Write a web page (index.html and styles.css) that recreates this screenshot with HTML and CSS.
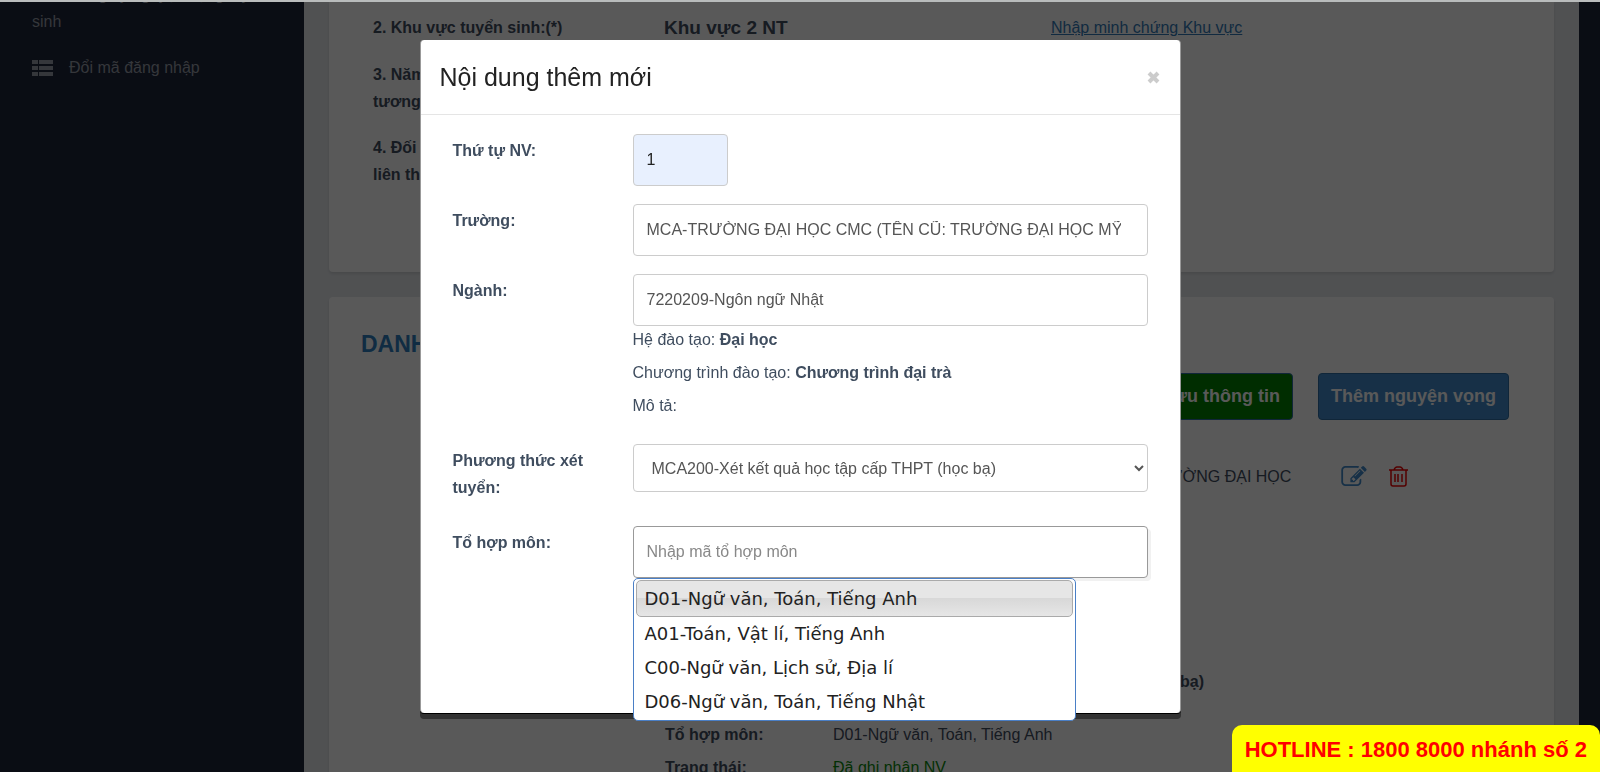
FILE: index.html
```html
<!DOCTYPE html>
<html lang="vi">
<head>
<meta charset="utf-8">
<title>Đăng ký nguyện vọng</title>
<link rel="stylesheet" href="styles.css">
</head>
<body>
<div class="page">
  <nav class="sidebar">
    <a class="nav-item nav-item-wrap" href="#"><span class="nav-first">Đăng ký nguyện vọng tuyển</span> sinh</a>
    <a class="nav-item" href="#">
      <svg class="nav-icon" viewBox="0 0 21 16" aria-hidden="true"><path d="M0 0h6v4H0zM7 0h14v4H7zM0 6h6v4H0zM7 6h14v4H7zM0 12h6v4H0zM7 12h14v4H7z"/></svg>
      <span>Đổi mã đăng nhập</span>
    </a>
  </nav>
  <main class="content">
    <section class="card card-info">
      <div class="info-row">
        <b>2. Khu vực tuyển sinh:(*)</b>
        <b class="info-value">Khu vực 2 NT</b>
        <a class="link" href="#">Nhập minh chứng Khu vực</a>
      </div>
      <div class="info-row"><b>3. Năm tốt nghiệp<br>tương đương:(*)</b></div>
      <div class="info-row"><b>4. Đối tượng<br>liên thông:</b></div>
    </section>
    <section class="card card-list">
      <h2 class="card-title">DANH SÁCH NGUYỆN VỌNG</h2>
      <div class="actions">
        <button class="btn btn-save" type="button">Lưu thông tin</button>
        <button class="btn" type="button">Thêm nguyện vọng</button>
      </div>
      <div class="wish">
        <dl class="wish-data">
          <dt>Trường:</dt><dd class="wish-long">MCA-TRƯỜNG ĐẠI HỌC CMC (TÊN CŨ: TRƯỜNG ĐẠI HỌC MỸ THUẬT CÔNG NGHIỆP Á CHÂU)</dd>
          <dt>Ngành:</dt><dd>7220209-Ngôn ngữ Nhật</dd>
          <dt>Hệ đào tạo:</dt><dd>Đại học</dd>
          <dt>Chương trình:</dt><dd>Chương trình đại trà</dd>
          <dt class="gap-small">Mô tả:</dt><dd></dd>
          <dt class="gap-after">Phương thức:</dt><dd class="wish-long"><b>MCA200-Xét kết quả học tập cấp THPT (học bạ)</b></dd>
          <dt>Tổ hợp môn:</dt><dd>D01-Ngữ văn, Toán, Tiếng Anh</dd>
          <dt>Trạng thái:</dt><dd class="ok">Đã ghi nhận NV</dd>
        </dl>
        <div class="wish-tools">
          <button class="tool tool-edit" type="button" aria-label="Sửa">
            <svg viewBox="0 128 1792 1408" width="26" height="20"><path d="M888 1184l116-116-152-152-116 116v56h96v96h56zm440-720q-16-16-33 1l-350 350q-17 17-1 33t33-1l350-350q17-17 1-33zm80 594v190q0 119-84.500 203.500t-203.500 84.500h-832q-119 0-203.500-84.500t-84.500-203.500v-832q0-119 84.500-203.500t203.500-84.500h832q63 0 117 25 15 7 18 23 3 17-9 29l-49 49q-14 14-32 8-23-6-45-6h-832q-66 0-113 47t-47 113v832q0 66 47 113t113 47h832q66 0 113-47t47-113v-126q0-13 9-22l64-64q15-15 35-7t20 29zm-96-738l288 288-672 672h-288v-288zm444 132l-92 92-288-288 92-92q28-28 68-28t68 28l152 152q28 28 28 68t-28 68z"/></svg>
          </button>
          <button class="tool tool-delete" type="button" aria-label="Xóa">
            <svg viewBox="0 0 19 21" width="19" height="21"><path class="line" d="M0 4h19M2 4v14q0 2 2 2h11q2 0 2-2V4M5 4q1-3 3-3h3q2 0 3 3M6 8v8M9 8v8M13 8v8"/></svg>
          </button>
        </div>
      </div>
    </section>
  </main>
</div>

<div class="backdrop">
  <div class="modal" role="dialog" aria-labelledby="modal-title">
    <header class="modal-head">
      <h4 class="modal-title" id="modal-title">Nội dung thêm mới</h4>
      <button class="close" type="button" aria-label="Đóng">
        <svg viewBox="0 0 13 13" width="13" height="13"><path d="M2 2l9 9M11 2l-9 9"/></svg>
      </button>
    </header>
    <form class="modal-body">
      <label class="label" for="order">Thứ tự NV:</label>
      <div><input class="control control-order" id="order" type="text" value="1"></div>

      <label class="label" for="school">Trường:</label>
      <div><input class="control control-long" id="school" type="text" value="MCA-TRƯỜNG ĐẠI HỌC CMC (TÊN CŨ: TRƯỜNG ĐẠI HỌC MỸ THUẬT CÔNG NGHIỆP Á CHÂU)"></div>

      <label class="label" for="major">Ngành:</label>
      <div>
        <input class="control" id="major" type="text" value="7220209-Ngôn ngữ Nhật">
        <p class="note">Hệ đào tạo: <b>Đại học</b></p>
        <p class="note">Chương trình đào tạo: <b>Chương trình đại trà</b></p>
        <p class="note">Mô tả:</p>
      </div>

      <label class="label" for="method">Phương thức xét tuyển:</label>
      <div>
        <select class="control control-select" id="method"><option>MCA200-Xét kết quả học tập cấp THPT (học bạ)</option></select>
      </div>

      <label class="label label-combo" for="combo">Tổ hợp môn:</label>
      <div class="combo">
        <input class="control control-active" id="combo" type="text" placeholder="Nhập mã tổ hợp môn">
        <ul class="menu">
          <li class="option option-on">D01-Ngữ văn, Toán, Tiếng Anh</li>
          <li class="option">A01-Toán, Vật lí, Tiếng Anh</li>
          <li class="option">C00-Ngữ văn, Lịch sử, Địa lí</li>
          <li class="option">D06-Ngữ văn, Toán, Tiếng Nhật</li>
        </ul>
      </div>
    </form>
  </div>
</div>
<div class="hotline">HOTLINE : 1800 8000 nhánh số 2</div>
</body>
</html>
```
FILE: styles.css
```css
* { box-sizing: border-box; }

body {
  margin: 0;
  height: 100vh;
  overflow: hidden;
  border-top: 2px solid #b9bcbc;
  font: 16px/27px "Liberation Sans", Arial, sans-serif;
  color: #3f4d5f;
  background: #1d263a;
}

h2, h4, p, ul, dl, dd { margin: 0; }
ul { padding: 0; list-style: none; }
button, input, select { font: inherit; }

.page {
  display: flex;
  height: 100%;
  overflow: hidden;
  padding-right: 21px;
}

/* Sidebar */
.sidebar {
  flex: 0 0 304px;
  padding: 0 32px;
  color: #989da8;
}
.nav-item {
  display: flex;
  align-items: center;
  gap: 16px;
  margin-bottom: 19px;
  color: inherit;
  text-decoration: none;
}
.nav-item-wrap { display: block; margin-top: -21px; }
.nav-first { display: block; padding-left: 37px; white-space: nowrap; }
.nav-icon { width: 21px; height: 16px; fill: #989da8; }

/* Page content */
.content {
  flex: 1;
  display: flex;
  flex-direction: column;
  gap: 25px;
  padding: 0 25px;
  background: #e5e8ec;
}
.card {
  background: #fff;
  box-shadow: 0 2px 3px rgba(0, 0, 0, .1);
}
.card-info {
  padding: 12px 44px 84px;
  border-radius: 0 0 4px 4px;
}
.info-row {
  display: grid;
  grid-template-columns: 200px 1fr 1fr;
  margin-bottom: 19px;
}
.info-row:first-child { grid-template-columns: 291px 387px 1fr; margin-bottom: 20px; }
.info-row:last-child { margin-bottom: 0; }
.info-value { font-size: 19px; }
.link { color: #337ab7; }

.card-list {
  flex: 1;
  min-height: 0;
  padding: 34px 45px 0 32px;
  border-radius: 4px 4px 0 0;
}
.card-title { font-size: 23px; line-height: 27px; color: #2f7fc0; }
.actions {
  display: flex;
  justify-content: flex-end;
  gap: 25px;
  margin-top: 15px;
}
.btn {
  height: 47px;
  padding: 0 12px;
  border: 1px solid #2e6da4;
  border-radius: 4px;
  background: #428bca;
  color: #fff;
  font-size: 18px;
  font-weight: bold;
}
.btn-save { background: #008000; }

.wish {
  display: flex;
  justify-content: flex-end;
  gap: 36px;
  margin-top: 43px;
}
.wish-data {
  display: grid;
  grid-template-columns: 168px 472px;
  row-gap: 6px;
}
.wish-long { padding-left: 11px; }
dt { font-weight: bold; }
.gap-small { margin-bottom: 13px; }
.gap-after { margin-bottom: 20px; }
.ok { color: #0b8a0b; }
.wish-tools {
  display: flex;
  gap: 22px;
  width: 168px;
  padding-top: 2px;
}
.tool {
  height: 22px;
  padding: 0;
  border: 0;
  background: none;
}
.tool svg { display: block; fill: currentColor; }
.tool .line { fill: none; stroke: currentColor; stroke-width: 2; }
.tool-edit { color: #428bca; }
.tool-delete { color: #e00; }
.tool-delete .line { stroke-width: 1.5; }

/* Modal */
.backdrop {
  position: fixed;
  inset: 2px 0 0;
  padding-top: 38px;
  background: rgba(0, 0, 0, .65);
}
.modal {
  width: 761px;
  margin: 0 auto;
  border: 1px solid #999;
  border-width: 0 1px;
  border-radius: 4px;
  background: #fff;
  box-shadow: 0 1px #000, 0 6px #333;
}
.modal-head {
  display: flex;
  justify-content: space-between;
  align-items: center;
  height: 75px;
  padding: 0 20px 0 19px;
  border-bottom: 1px solid #e5e5e5;
}
.modal-title { color: #222; font-size: 25px; font-weight: normal; }
.close {
  padding: 0;
  border: 0;
  background: none;
}
.close svg { display: block; fill: none; stroke: #ccc; stroke-width: 4; }
.modal-body {
  display: grid;
  grid-template-columns: 152px 1fr;
  column-gap: 28px;
  row-gap: 18px;
  padding: 19px 32px 135px 32px;
}
.label { padding-top: 3px; font-weight: bold; }
.control {
  display: block;
  width: 100%;
  height: 52px;
  padding: 0 13px;
  border: 1px solid #ccc;
  border-radius: 4px;
  background: #fff;
  color: #555;
}
.control-order { width: 95px; background: #e8f0fe; color: #222; }
.control-long { padding-right: 26px; }
.control-select { height: 48px; padding: 0 4px 0 14px; }
.control-active {
  border-color: #999;
  box-shadow: 3px 3px #f1f1f1;
}
.control-active::placeholder { color: #888; }
.note { margin-bottom: 6px; }
.note:last-child { margin-bottom: 7px; }

.combo { position: relative; margin-top: 7px; }
.label-combo { margin-top: 7px; }
.menu {
  position: absolute;
  top: 52px;
  left: 0;
  width: 443px;
  padding: 1px 2px 2px;
  border: 1px solid #4a7fc6;
  border-radius: 5px;
  background: #fff;
  color: #222;
  font: 18px/33px "DejaVu Sans", sans-serif;
}
.option { padding: 0 8px; border: 1px solid transparent; margin-bottom: -1px; }
.option-on {
  padding: 1px 8px;
  border-color: #aaa;
  border-radius: 5px;
  background: linear-gradient(#e6e6e6 50%, #d8d8d8 50%, #e6e6e6);
}

.hotline {
  position: fixed;
  right: 0;
  bottom: 0;
  padding: 11px 13px 9px;
  border-radius: 10px 10px 0 0;
  background: #ff0;
  color: #f00;
  font-size: 22px;
  font-weight: bold;
}
```
